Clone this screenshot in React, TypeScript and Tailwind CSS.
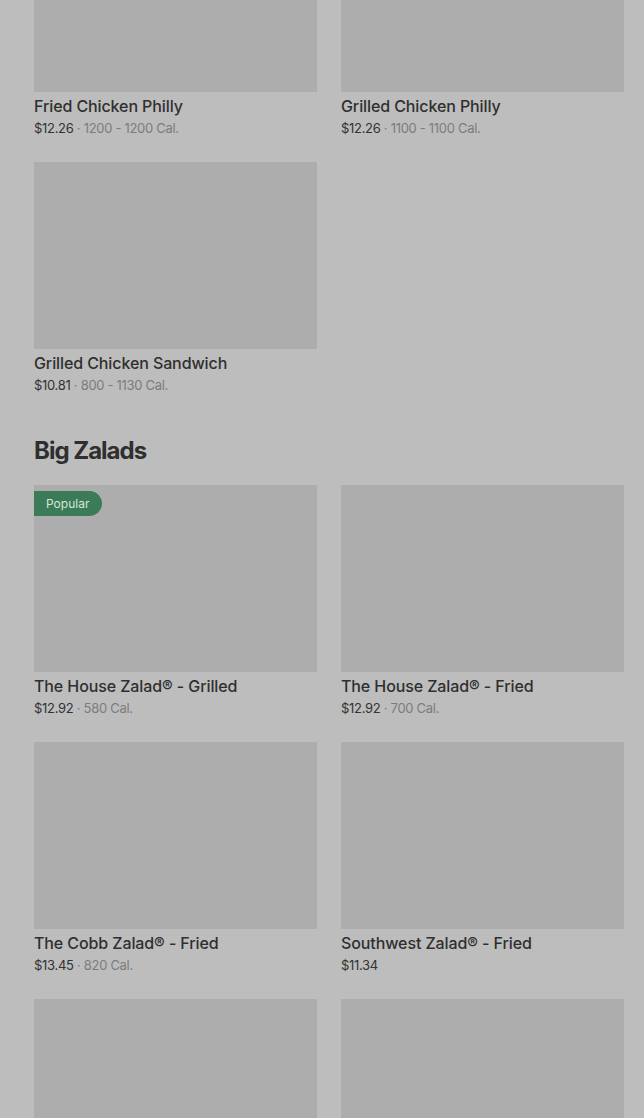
import React from 'react';

interface MenuItem {
  name: string;
  price: string;
  cal?: string;
  popular?: boolean;
}

const chicken: MenuItem[] = [
  { name: 'Fried Chicken Philly', price: '$12.26', cal: '1200 - 1200 Cal.' },
  { name: 'Grilled Chicken Philly', price: '$12.26', cal: '1100 - 1100 Cal.' },
  { name: 'Grilled Chicken Sandwich', price: '$10.81', cal: '800 - 1130 Cal.' },
];

const zalads: MenuItem[] = [
  { name: 'The House Zalad® - Grilled', price: '$12.92', cal: '580 Cal.', popular: true },
  { name: 'The House Zalad® - Fried', price: '$12.92', cal: '700 Cal.' },
  { name: 'The Cobb Zalad® - Fried', price: '$13.45', cal: '820 Cal.' },
  { name: 'Southwest Zalad® - Fried', price: '$11.34' },
  { name: '', price: '' },
  { name: '', price: '' },
];

const Card = ({ item }: { item: MenuItem }) => {
  return (
    <div className="flex flex-col">
      <div className="relative h-[187px] bg-[#adadad]">
        {item.popular && (
          <span className="absolute left-0 top-[6px] h-[25px] flex items-center pl-3 pr-[13px] rounded-r-full bg-[#3c7b58] text-[12px] text-[#d5e6da]">
            Popular
          </span>
        )}
      </div>
      {item.name && (
        <>
          <p className="mt-0.5 text-[16px] leading-6 font-medium tracking-[-0.1px] text-[#2f2f2f]">{item.name}</p>
          <p className="text-[13px] leading-5 tracking-[-0.3px] text-[#333]">
            {item.price}
            {item.cal && <span className="text-[#7c7c7c]"> · {item.cal}</span>}
          </p>
        </>
      )}
    </div>
  );
};

const App: React.FC = () => {
  return (
    <div className="min-h-[1118px] bg-[#bdbdbd] overflow-hidden pl-[34px] pr-[20px]" style={{ fontFamily: 'Inter, "Noto Sans", sans-serif' }}>
      <div className="-mt-[95px]">
        <div className="grid grid-cols-2 gap-x-6 gap-y-6">
          {chicken.map((it) => (
            <Card key={it.name} item={it} />
          ))}
        </div>
        <h2 className="mt-10 text-[24px] leading-8 font-bold tracking-[-1px] text-[#2f2f2f]">Big Zalads</h2>
        <div className="mt-[18px] grid grid-cols-2 gap-x-6 gap-y-6">
          {zalads.map((it, i) => (
            <Card key={i} item={it} />
          ))}
        </div>
      </div>
    </div>
  );
};

export default App;
